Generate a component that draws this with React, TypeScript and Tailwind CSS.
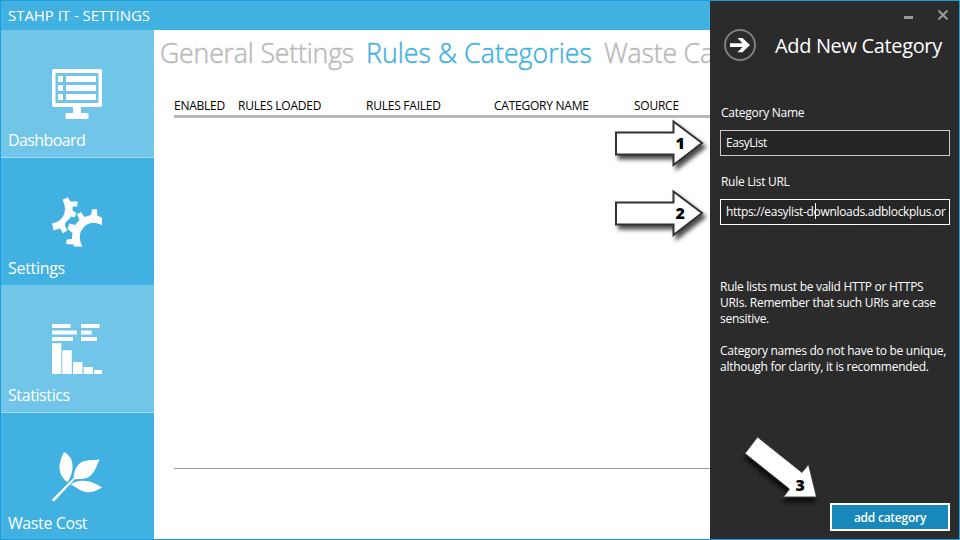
import type { ReactNode } from "react";

const font = "font-['Open_Sans','Noto_Sans',sans-serif]";

function MonitorIcon() {
  return (
    <svg viewBox="0 0 50 50" className="h-[50px] w-[50px]" fill="#fff">
      <path fillRule="evenodd" d="M2 0H48Q50 0 50 2V36Q50 38 48 38H2Q0 38 0 36V2Q0 0 2 0ZM3.500 4V34H46.500V4Z" />
      <path d="M6 7h5v6H6zM14 7h30v6H14zM6 16h5v6H6zM14 16h30v6H14zM6 25h5v6H6zM14 25h30v6H14z" />
      <path d="M21 38H29V44H35Q36.500 44 36.500 46V50H13.500V46Q13.500 44 15 44H21Z" />
    </svg>
  );
}

function GearsIcon() {
  return (
    <svg viewBox="0 0 50 50" className="h-[50px] w-[50px]" fill="#fff">
      <path d="M10.500 2.700L15.900.3L18.300 4.600L25.700 4.600L25.200 9.600L20.700 9.600L20.500 13.500L24.500 16L22.500 20.500L19.500 19.500L13.500 25.500L13 28.500L15.200 33.500L11 36.300L8 31.500L1.500 33.500L0 26.300C7.500 25.500 12.800 19.500 13 12.500C13 9 12.300 7 10.500 2.700Z" />
      <path d="M25 17.500L29 15L32.300 20L39 18L40 12.200L45 12.200L45.300 18.500L50 20.800V28.300C44 24.700 37.500 24.500 32.500 29.500C26.800 35 26.500 42 30.500 49.500H22L21.500 47.500L14 47L14.800 42.500L19.800 42L20.500 36L15.500 32L17.500 26.500L23 28L27.500 23Z" />
    </svg>
  );
}

function StatsIcon() {
  return (
    <svg viewBox="0 0 50 50" className="h-[50px] w-[50px]" fill="#fff">
      <path d="M0 0h18.500v4H0zM29 0h18.500v4H29zM0 6.500h25v4H0zM29 6.500h10.700v4H29zM0 13h21v4H0zM29 13h16v4H29z" />
      <path d="M0 19.300h9.300V50H0zM10.300 26.200h9.500V50H10.300zM21 38h9.500v12H21zM31.700 43h9.200v7H31.700zM42 46h8v4h-8z" />
    </svg>
  );
}

function LeafIcon() {
  return (
    <svg viewBox="0 0 50 50" className="h-[50px] w-[50px]" fill="#fff">
      <path d="M12 0C18 3.500 20.500 8 20.500 14C20.500 20 19 25 15.500 30.300C9.500 26 7 20 7.500 13Q8.500 6 12 0Z" />
      <path d="M47.500 7.500C45 13 43 20 37.500 24.500C33 27.500 27.500 27 21.500 27.200C22 21 22.500 15 29 10.500C34 7.500 41 8.500 47.500 7.500Z" />
      <path d="M18.500 32.500C24 28.500 31 28 37.500 29.500C42 30.500 46 33 50 35.500C44 39 39 41 34 40C27.500 39 24 34.500 18.500 32.500Z" />
      <path d="M21 26.500L22.500 27.500L2.500 49Q1 50 0 47.500Z" />
    </svg>
  );
}

function Tile({ label, className, track, children }: { label: string; className: string; track: string; children: ReactNode }) {
  return (
    <div className={`flex flex-col items-start pt-[39px] ${className}`}>
      <div className="ml-[51px]">{children}</div>
      <div className={`mt-[9px] w-full pl-[7px] text-[16px] leading-6 whitespace-nowrap ${track}`}>{label}</div>
    </div>
  );
}

function Callout({ n, className }: { n: string; className: string }) {
  return (
    <svg className={`absolute left-[605px] h-[70px] w-[110px] overflow-visible ${className}`} viewBox="0 0 110 70">
      <path
        className="drop-shadow-[3px_4px_2px_rgba(0,0,0,0.7)]"
        d="M10 17.500H67.500V6.500L96 28L67.500 50V39.500H10Z"
        fill="#fff"
        stroke="#333"
        strokeWidth="2"
      />
      <text x="69.500" y="33.500" fontSize="16" fontWeight="800">{n}</text>
    </svg>
  );
}

export default function App() {
  return (
    <div className={`relative flex h-[540px] w-[960px] overflow-hidden border border-[#1b9fdc] bg-white text-white ${font}`}>
      <div className="flex w-[709px] shrink-0 flex-col overflow-hidden">
        <header className="h-[29px] shrink-0 bg-[#41b1e1] pl-[7px] text-[15px] leading-[28px] tracking-[-0.04px]">STAHP IT - SETTINGS</header>
        <div className="flex min-h-0 flex-1">
          <nav className="flex w-[153px] shrink-0 flex-col">
            <Tile label="Dashboard" track="tracking-[-0.6px]" className="h-32 border-b border-[#a5dbf1] bg-[#71c5e8]"><MonitorIcon /></Tile>
            <Tile label="Settings" track="tracking-[-0.3px]" className="h-[127px] bg-[#41b1e1]"><GearsIcon /></Tile>
            <Tile label="Statistics" track="tracking-[-0.4px]" className="h-32 border-b border-[#a5dbf1] bg-[#71c5e8]"><StatsIcon /></Tile>
            <Tile label="Waste Cost" track="tracking-[-0.4px]" className="flex-1 bg-[#41b1e1]"><LeafIcon /></Tile>
          </nav>
          <main className="min-w-0 flex-1 overflow-hidden">
            <div className="flex h-[62px] pl-[6px] text-[26.67px] leading-[45px] font-light whitespace-nowrap text-[#b9b9b9] [-webkit-text-stroke:0.45px_currentColor]">
              <span className="w-[206px] shrink-0 tracking-[-0.17px]">General Settings</span>
              <span className="w-[238px] shrink-0 tracking-[0.07px] text-[#41b1e1]">Rules &amp; Categories</span>
              <span className="shrink-0 tracking-[-0.2px]">Waste Ca</span>
            </div>
            <div className="ml-5 flex h-[26px] border-b-[3px] border-[#b9b9b9] pt-[6px] text-[12px] leading-4 tracking-[-0.24px] whitespace-nowrap text-black">
              <span className="w-16 shrink-0">ENABLED</span>
              <span className="w-32 shrink-0">RULES LOADED</span>
              <span className="w-32 shrink-0">RULES FAILED</span>
              <span className="w-[140px] shrink-0">CATEGORY NAME</span>
              <span>SOURCE</span>
            </div>
            <div className="ml-5 h-[351px] border-b border-[#999]" />
          </main>
        </div>
      </div>

      <aside className="flex min-w-0 flex-1 flex-col bg-[#2b2b2b] pr-[9px] pl-[10px]">
        <div className="flex h-[28px] items-start justify-end pt-[9px]">
          <span className="mt-[6px] mr-[25px] h-[3px] w-[9px] bg-[#999]" />
          <svg className="mr-[2px] h-[10px] w-[10px]" viewBox="0 0 10 10" stroke="#999" strokeWidth="2"><path d="M.5.5L9.500 9.500M9.500.5L.5 9.500" /></svg>
        </div>
        <div className="flex h-[33px] items-center">
          <svg className="-mt-[2px] ml-[4px] h-8 w-8 shrink-0" viewBox="0 0 32 32">
            <circle cx="16" cy="16" r="15" fill="none" stroke="#808080" strokeWidth="2" />
            <path d="M6 14.300H18.500L13.500 9H18.500L26 16L18.500 23.300H13.500L18.500 17.900H6Z" fill="#fff" />
          </svg>
          <h1 className="ml-[19px] text-[20px] leading-[33px] tracking-[-0.35px] whitespace-nowrap">Add New Category</h1>
        </div>
        <label className="mt-[43px] pl-px text-[12px] leading-4 tracking-[-0.25px]">Category Name</label>
        <div className="mt-[9px] h-[26px] w-[230px] border border-[#ccc] bg-[#252525] pl-[5px] text-[12px] leading-6 tracking-[-0.45px]">EasyList</div>
        <label className="mt-[18px] pl-px text-[12px] leading-4 tracking-[-0.3px]">Rule List URL</label>
        <div className="relative mt-[9px] h-[26px] w-[230px] border border-white bg-[#252525] pl-[5px] text-[12px] leading-6 tracking-[-0.32px] whitespace-nowrap">
          https://easylist-downloads.adblockplus.or
          <span className="absolute top-[3px] left-[94px] h-4 w-px bg-white" />
        </div>
        <div className="mt-[54px] text-[12px] leading-4 tracking-[-0.28px] whitespace-nowrap">
          <p>Rule lists must be valid HTTP or HTTPS</p>
          <p>URIs. Remember that such URIs are case</p>
          <p>sensitive.</p>
          <p className="mt-4">Category names do not have to be unique,</p>
          <p>although for clarity, it is recommended.</p>
        </div>
        <button className="mt-auto mb-2 h-7 w-[120px] self-end border-2 border-white bg-[#1788b9] pt-px text-[12px] leading-[23px] font-semibold tracking-[-0.25px]">add category</button>
      </aside>

      <Callout n="1" className="top-[114px]" />
      <Callout n="2" className="top-[184px]" />
      <svg className="absolute top-[430px] left-[735px] h-[80px] w-[95px] overflow-visible" viewBox="0 0 95 80">
        <path
          className="drop-shadow-[-1px_5px_2px_rgba(0,0,0,0.7)]"
          d="M21.500 6L66 41.500L72.500 33.500L80.500 66H47.500L53.500 58L9 22.500Z"
          fill="#fff"
          stroke="#444"
          strokeWidth="1"
        />
        <text x="59.500" y="60" fontSize="16" fontWeight="800">3</text>
      </svg>
    </div>
  );
}
